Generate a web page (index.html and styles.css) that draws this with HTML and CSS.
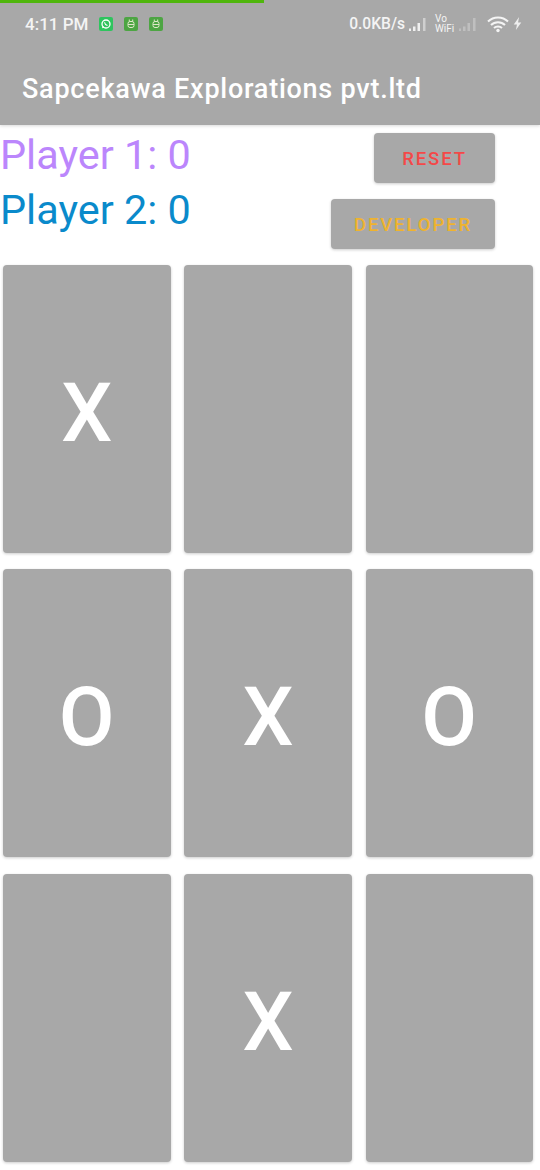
FILE: index.html
```html
<!DOCTYPE html>
<html>
  <head>
    <title>Sapcekawa Explorations pvt.ltd</title>
    <meta charset="utf-8">
    <link rel="stylesheet" href="styles.css">
  </head>
<body>
  <div class="top">
    <div class="progress"></div>
    <div class="status">
      <span class="time">4:11 PM</span>
      <span class="notif wa">
        <svg viewBox="0 0 14 14" width="14" height="14"><circle cx="7" cy="7" r="4" fill="none" stroke="#fff" stroke-width="1.3"/><path d="M3 11.3l.8-2.600 1.800 1.800z" fill="#fff"/><path d="M5.500 5.300c.2 1.600 1.200 2.700 3 3.300" fill="none" stroke="#fff" stroke-width="1.100"/></svg>
      </span>
      <span class="notif bot">
        <svg viewBox="0 0 14 14" width="14" height="14"><rect x="4" y="4.500" width="6" height="6" rx="2" fill="none" stroke="#dfe8c8" stroke-width="1"/><path d="M4 7.500h6M5.300 4.500V2.500M8.700 4.500V2.500" stroke="#dfe8c8" stroke-width="1" fill="none"/></svg>
      </span>
      <span class="notif bot">
        <svg viewBox="0 0 14 14" width="14" height="14"><rect x="4" y="4.500" width="6" height="6" rx="2" fill="none" stroke="#dfe8c8" stroke-width="1"/><path d="M4 7.500h6M5.300 4.500V2.500M8.700 4.500V2.500" stroke="#dfe8c8" stroke-width="1" fill="none"/></svg>
      </span>
      <span class="spacer"></span>
      <span class="speed">0.0KB/s</span>
      <svg class="bars" viewBox="0 0 20 16" width="20" height="16"><path d="M1 12.500h2V15H1zM5 10.500h2.500V15H5zM9.500 7H12v8H9.500z" fill="#f0f0f0"/><path d="M15 2h2.500v13H15z" fill="#cfcfcf"/></svg>
      <span class="vowifi">Vo<br>WiFi</span>
      <svg class="bars dim" viewBox="0 0 20 16" width="20" height="16"><path d="M1 12.500h2V15H1zM5 10.500h2.500V15H5zM9.500 7H12v8H9.500zM15 2h2.500v13H15z" fill="#bfbfbf"/></svg>
      <svg class="wifi" viewBox="0 0 22 18" width="22" height="18"><path d="M1 6.500c5.500-5.500 14.500-5.500 20 0M4 10c3.800-3.800 10.200-3.800 14 0M7 13c2.200-2 5.800-2 8 0" fill="none" stroke="#f4f4f4" stroke-width="2"/><circle cx="11" cy="15.500" r="1.700" fill="#f4f4f4"/></svg>
      <svg class="bolt" viewBox="0 0 10 14" width="11" height="15"><path d="M6.500 1L1.500 8h3l-1 5 5-7h-3z" fill="#eee"/></svg>
    </div>
    <div class="appbar">Sapcekawa Explorations pvt.ltd</div>
  </div>

  <div class="head">
    <div class="players">
      <div class="player one">Player 1: 0</div>
      <div class="player two">Player 2: 0</div>
    </div>
    <div class="actions">
      <button class="btn reset">RESET</button>
      <button class="btn dev">DEVELOPER</button>
    </div>
  </div>

  <div class="board">
    <button class="cell">X</button>
    <button class="cell"></button>
    <button class="cell"></button>
    <button class="cell">O</button>
    <button class="cell">X</button>
    <button class="cell">O</button>
    <button class="cell"></button>
    <button class="cell">X</button>
    <button class="cell"></button>
  </div>
</body>
</html>
```

FILE: styles.css
```css
body {
  margin: 0;
  width: 540px;
  height: 1170px;
  overflow: hidden;
  background-color: #ffffff;
  font-family: Roboto, sans-serif;
}

.top {
  height: 125px;
  background-color: #a8a8a8;
  box-shadow: 0 1px 3px rgba(0, 0, 0, 0.15);
}
.progress {
  width: 264px;
  height: 3px;
  background-color: #4fb60c;
}
.status {
  display: flex;
  align-items: center;
  height: 41px;
  padding: 0 17px 0 25px;
  color: #f4f4f4;
}
.time {
  font-size: 17px;
  font-weight: 500;
  margin-right: 11px;
}
.notif {
  display: flex;
  width: 14px;
  height: 14px;
  margin-right: 11px;
  border-radius: 2px;
}
.notif.wa { background-color: #2fc45e; }
.notif.bot { background-color: #4da543; }
.spacer { flex: 1; }
.speed {
  font-size: 15.600px;
  font-weight: 500;
}
.bars { margin-left: 3px; }
.vowifi {
  font-size: 10px;
  line-height: 10px;
  margin-left: 7px;
  width: 19px;
}
.bars.dim { margin-left: 4px; }
.wifi { margin-left: 9px; }
.bolt { margin-left: 3px; }

.appbar {
  height: 81px;
  padding-left: 22px;
  line-height: 90px;
  color: #ffffff;
  font-size: 27px;
  font-weight: 500;
  letter-spacing: 0.750px;
}

.head {
  display: flex;
  justify-content: space-between;
  height: 140px;
}
.players {
  padding-top: 3px;
}
.player {
  font-size: 41.400px;
  line-height: 55px;
}
.player.one { color: #bb86fc; }
.player.two { color: #0a8acb; }
.actions {
  display: flex;
  flex-direction: column;
  align-items: flex-end;
  gap: 16px;
  padding: 8px 45px 0 0;
}
.btn {
  height: 50px;
  padding: 2px 0 0;
  border: 0;
  border-radius: 4px;
  background-color: #a8a8a8;
  box-shadow: 0 1px 3px rgba(0, 0, 0, 0.2);
  font-family: Roboto, sans-serif;
  font-size: 18.500px;
  font-weight: 500;
  letter-spacing: 1.900px;
}
.btn.reset { width: 121px; color: #f44848; }
.btn.dev { width: 164px; color: #efb32e; }

.board {
  display: grid;
  grid-template-columns: repeat(3, 167.500px);
  grid-template-rows: repeat(3, 288px);
  column-gap: 13.750px;
  row-gap: 16.250px;
  padding-left: 3px;
}
.cell {
  border: 0;
  padding: 9px 0 0;
  border-radius: 4px;
  background-color: #a8a8a8;
  box-shadow: 0 1px 3px rgba(0, 0, 0, 0.2);
  color: #ffffff;
  font-family: Roboto, sans-serif;
  font-size: 81px;
  font-weight: 500;
}
```
